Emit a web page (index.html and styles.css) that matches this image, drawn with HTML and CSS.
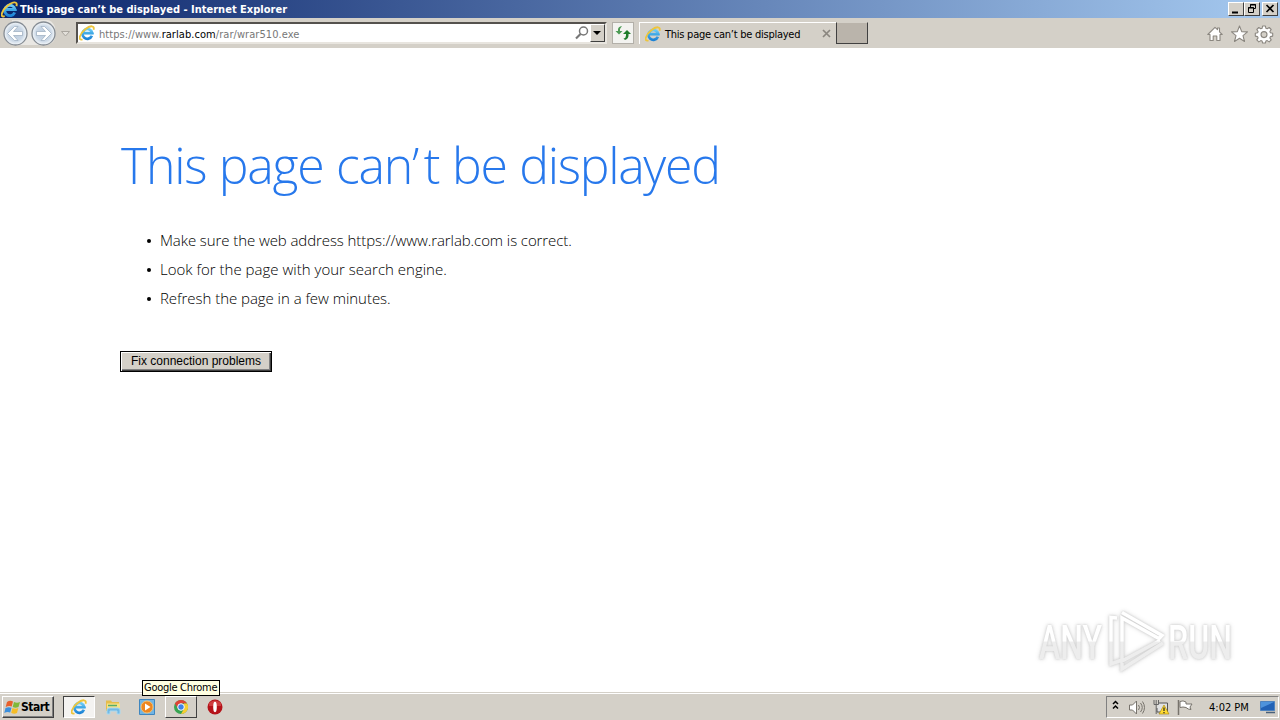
FILE: index.html
```
<!DOCTYPE html>
<html lang="en">
<head>
<meta charset="utf-8">
<title>This page can’t be displayed</title>
<link rel="stylesheet" href="styles.css">
</head>
<body>
<svg class="defs" aria-hidden="true">
  <defs>
    <linearGradient id="blue" x1="0" y1="0" x2="0" y2="1"><stop offset="0" stop-color="#6cccf5"/><stop offset="1" stop-color="#1c83d6"/></linearGradient>
    <radialGradient id="glass"><stop offset="0" stop-color="#b9c9dc"/><stop offset=".65" stop-color="#cbd8e6"/><stop offset="1" stop-color="#f5f8fb"/></radialGradient>
    <symbol id="ie" viewBox="0 0 16 16">
      <path d="M12.900 10.800A4.900 4.900 0 1 1 13.200 8H4.600" fill="none" stroke="url(#blue)" stroke-width="2.700"/>
      <path d="M4 8.500h10.500" stroke="#3fa9e6" stroke-width="1.800"/>
      <path d="M3.500 14.300C-1.500 16 .5 9 6 4.500S16 .3 14.500 4.800" fill="none" stroke="#edc53c" stroke-width="1.800"/>
    </symbol>
  </defs>
</svg>
<div class="desktop">
  <header class="titlebar">
    <svg class="i17"><use href="#ie"/></svg>
    <span class="title">This page can’t be displayed - Internet Explorer</span>
    <div class="winbtns">
      <span class="wb"><svg viewBox="0 0 14 11"><path d="M3 9.500h6" stroke="#000" stroke-width="2"/></svg></span>
      <span class="wb"><svg viewBox="0 0 14 11"><path d="M5.500 4V1.500h5v4H9M5 2h6M3.500 4.500h5v5h-5zM3 5h6" fill="none" stroke="#000"/></svg></span>
      <span class="wb close"><svg viewBox="0 0 14 11"><path d="M3.500 2l7 7M10.500 2l-7 7" stroke="#000" stroke-width="1.7"/></svg></span>
    </div>
  </header>
  <nav class="toolbar">
    <svg class="navs" viewBox="0 0 76 30">
      <path d="M12 2h35q5 0 8 7v12q-3 6-10 6H12z" fill="#e9e7e3"/>
      <circle cx="15.500" cy="15.500" r="11.500" fill="url(#glass)" stroke="#858c94" stroke-width="1.300"/>
      <circle cx="43.500" cy="15.500" r="11.500" fill="url(#glass)" stroke="#858c94" stroke-width="1.300"/>
      <path d="M7.500 15.500l7-7h3.500l-4.500 5h9v4h-9l4.500 5h-3.500z" fill="#fff" stroke="#9aabbd" stroke-width=".7"/>
      <path d="M51.500 15.500l-7-7H41l4.500 5h-9v4h9l-4.500 5h3.500z" fill="#fff" stroke="#9aabbd" stroke-width=".7"/>
      <path d="M61.500 13.500h8l-4 4.500z" fill="#e3e0da" stroke="#aaa69f"/>
    </svg>
    <div class="address">
      <svg class="i16"><use href="#ie"/></svg>
      <span class="url">https://www.<b>rarlab.com</b>/rar/wrar510.exe</span>
      <svg class="search" viewBox="0 0 16 16"><circle cx="9.500" cy="6" r="4" fill="none" stroke="#777" stroke-width="1.500"/><path d="M6.500 9L2 13.500" stroke="#777" stroke-width="2.200"/></svg>
      <span class="drop"><svg viewBox="0 0 12 16"><path d="M2 6h8L6 10z"/></svg></span>
    </div>
    <div class="refresh"><svg viewBox="0 0 20 20"><path d="M9 3Q5 3.500 5 6.500V8H2.500L6 11.500 9.500 8H7V6z" fill="#4c9b54"/><path d="M10.500 15.500q2.500-.5 2.500-3V11h-3l4-4 4 4h-2.500v1.500q0 3-3.500 4.500z" fill="#1f7d2b"/></svg></div>
    <div class="tab">
      <svg class="i16"><use href="#ie"/></svg>
      <span class="tabtext">This page can’t be displayed</span>
      <svg class="tabx" viewBox="0 0 9 9"><path d="M1 1l7 7M8 1L1 8" stroke="#8a867f" stroke-width="1.700"/></svg>
    </div>
    <div class="newtab"></div>
    <svg class="tools" viewBox="0 0 70 20">
      <g fill="#fff" stroke="#8b8780" stroke-width="1.100" stroke-linejoin="round">
        <path d="M4 16.500v-6H1.800L9 3.300l2.500 2.400V4h2v3.800l2.700 2.700H14v6h-3.200V12H7.200v4.500z"/>
        <path d="M33.500 2l2.200 5.600 5.800.3-4.500 3.800 1.500 5.800-5-3.200-5 3.200 1.500-5.800-4.500-3.800 5.800-.3z"/>
        <path d="M56.600 2h2.800l.5 2.300 1.300.5 2-1.300 2 2-1.300 2 .5 1.300 2.300.5v2.800l-2.300.5-.5 1.300 1.300 2-2 2-2-1.300-1.300.5-.5 1.900h-2.800l-.5-1.900-1.300-.5-2 1.300-2-2 1.300-2-.5-1.300-2.300-.5V9.300l2.300-.5.500-1.300-1.300-2 2-2 2 1.300 1.300-.5z"/>
        <circle cx="58" cy="10.600" r="3" fill="#d4d0c8"/>
      </g>
    </svg>
  </nav>
  <main class="page">
    <h1 class="heading">This page can<span class="apos">’</span>t be displayed</h1>
    <ul class="tips">
      <li class="t1">Make sure the web address https://www.rarlab.com is correct.</li>
      <li class="t2">Look for the page with your search engine.</li>
      <li class="t3">Refresh the page in a few minutes.</li>
    </ul>
    <button class="fix">Fix connection problems</button>
    <svg class="mark" viewBox="0 0 220 80">
      <defs><linearGradient id="wm" x1="0" y1="20" x2="0" y2="60" gradientUnits="userSpaceOnUse"><stop offset=".52" stop-color="#fff"/><stop offset=".56" stop-color="#ededed"/></linearGradient></defs>
      <g class="glow" fill="url(#wm)">
        <text x="9" y="59" textLength="63" lengthAdjust="spacingAndGlyphs">ANY</text>
        <text x="138" y="59" textLength="64" lengthAdjust="spacingAndGlyphs">RUN</text>
        <path d="M92 12.500L132 35.500L129 38.500L92 18V61L130 40.500M87 18L81 17.500V64L92 60M92 63V69L133 43" fill="none" stroke="url(#wm)" stroke-width="3.500"/>
      </g>
    </svg>
    <div class="tooltip"><span>Google Chrome</span></div>
  </main>
  <footer class="taskbar">
    <div class="start">
      <svg viewBox="0 0 17 16"><path d="M3 3q3-2 6-.5L7.700 7.500Q5 6.500 1.700 8z" fill="#e8602c"/><path d="M10 3q3 1.500 6 0l-1.500 5q-3 1.500-5.800 0z" fill="#80b83a"/><path d="M1.500 9q3-1.500 6-.3L6.200 13.500Q3 12.500.3 14z" fill="#3b8fdd"/><path d="M8.500 9q3 1.500 5.800 0L13 14q-3 1.500-5.800-.3z" fill="#f6bd27"/></svg>
      <b>Start</b>
    </div>
    <div class="task active"><svg class="i16"><use href="#ie"/></svg></div>
    <div class="task"><svg class="i18" viewBox="0 0 18 18"><path d="M2 2.500h5l1 1.500h7v9H2z" fill="#e5bd4c"/><path d="M3 5.500h13V12H3z" fill="#f8e287"/><path d="M4 7.500h9" stroke="#57ad68" stroke-width="1.500"/><path d="M3 16v-4q0-2 2-2h9q2 0 2 2v4h-3v-3H6v3z" fill="#72b9e5" stroke="#a8d9f1"/></svg></div>
    <div class="task"><svg class="i18" viewBox="0 0 18 18"><path d="M1.500 1.500h15v15h-15z" fill="#71b5e5" stroke="#3f86bf"/><circle cx="9" cy="9" r="6" fill="#ed8620" stroke="#f9c06c"/><path d="M7 5.500l5.500 3.500L7 12.500z" fill="#fff"/></svg></div>
    <div class="task raised"><svg class="i18" viewBox="0 0 18 18"><circle cx="9" cy="9" r="7" fill="#37a451"/><path d="M2.900 5.500A7 7 0 0 1 15.100 5.500H9L6 10.700z" fill="#de4336"/><path d="M15.100 5.500A7 7 0 0 1 9 16l3-5.200V5.500z" fill="#f8ce32"/><circle cx="9" cy="9" r="3.300" fill="#3f82e8" stroke="#fff"/></svg></div>
    <div class="task"><svg class="i18" viewBox="0 0 18 18"><circle cx="9" cy="9" r="7.500" fill="#b51219"/><path d="M3 5q6-5 12 0v3H3z" fill="#cf3c3f"/><ellipse cx="9" cy="9" rx="1.800" ry="5.200" fill="#fff"/></svg></div>
    <div class="tray">
      <svg class="trayicons" viewBox="0 0 92 20">
        <path d="M6 7L8.500 4.500 11 7M6 11.500L8.500 9l2.500 2.500" fill="none" stroke="#000" stroke-width="1.500"/>
        <g fill="#fff" stroke="#77736c"><path d="M22.500 8h3l4-4v13l-4-4h-3z"/><path d="M31.500 8q2 2.500 0 5M33.500 6q3.500 4.500 0 9M35.500 4.500q4 6 0 12" fill="none"/></g>
        <path d="M51 6h9.500v9H50v-4" fill="#e0e1e2" stroke="#555"/><path d="M47 3v4.500h4.500V3M49.200 3v14" fill="none" stroke="#666"/><path d="M57 8l5 9H52z" fill="#ffdb33" stroke="#a58100" stroke-width=".6"/><path d="M57 10.500v3.500M57 15v1.200" stroke="#222" stroke-width="1.200"/>
        <path d="M71.500 3v15" stroke="#77736c" stroke-width="1.500"/><path d="M73 4.500q3-1.500 6 .5v2h6l-2 3 1 2.500q-3 0-5-2-3-1-6 0z" fill="#fff" stroke="#77736c"/>
      </svg>
      <span class="clock">4:02 PM</span>
      <svg class="monitor" viewBox="0 0 18 16"><path d="M1.500 2.500h14v9h-14z" fill="#2262b6" stroke="#4f83be"/><path d="M2 3h13L2 9z" fill="#4e93dc"/><path d="M7 13.500h9" stroke="#49617b" stroke-width="1.500"/></svg>
    </div>
  </footer>
</div>
</body>
</html>
```
FILE: styles.css
```
* { box-sizing: border-box; }
body { margin: 0; background: #fff; color: #000; font-family: "DejaVu Sans Condensed", "DejaVu Sans", sans-serif; font-size: 11px; }
svg { display: block; flex: none; }
.defs { position: absolute; width: 0; height: 0; }
.desktop { width: 1280px; height: 720px; display: flex; flex-direction: column; overflow: hidden; }
.i16 { width: 16px; height: 16px; }
.i17 { width: 17px; height: 17px; }
.i18 { width: 18px; height: 18px; }
span, b, li, h1, button { white-space: nowrap; }

.titlebar { height: 18px; flex: none; display: flex; align-items: center; padding: 0 2px 0 1px; background: linear-gradient(90deg, #0a246a, #a6caf0); }
.title { color: #fff; font: bold 11px "DejaVu Sans Condensed", sans-serif; margin-left: 2px; letter-spacing: .01px; }
.winbtns { display: flex; margin-left: auto; }
.wb { width: 16px; height: 14px; background: #d4d0c8; border: 1px solid; border-color: #fff #404040 #404040 #fff; }
.wb svg { width: 14px; height: 11px; }
.wb.close { margin-left: 2px; }

.toolbar { height: 30px; flex: none; display: flex; align-items: center; background: #d4d0c8; }
.navs { width: 76px; height: 30px; }
.address { width: 531px; height: 22px; display: flex; align-items: center; background: #fff; border: 2px solid; border-color: #55524e #e8e5df #e8e5df #55524e; padding-left: 1px; }
.url { color: #777; margin-left: 4px; padding-top: 2px; letter-spacing: .06px; }
.url b { font-weight: normal; color: #000; }
.search { width: 16px; height: 16px; margin-left: auto; }
.drop { width: 15px; height: 18px; background: #d4d0c8; border: 1px solid; border-color: #fff #404040 #404040 #fff; }
.drop svg { width: 12px; height: 16px; }
.refresh { width: 22px; height: 22px; margin-left: 5px; background: #f3f3f0; border: 1px solid #b3b0a9; }
.refresh svg { width: 20px; height: 20px; }
.tab { width: 197px; height: 22px; margin-left: 5px; padding: 0 5px; display: flex; align-items: center; border-top: 1px solid #fff; border-left: 1px solid #fff; }
.tabtext { margin-left: 4px; padding-top: 2px; letter-spacing: -.25px; }
.tabx { width: 9px; height: 9px; margin-left: auto; }
.newtab { width: 32px; height: 22px; margin-top: -1px; background: #bab4ab; border: 1px solid; border-color: #d4d0c8 #404040 #404040 #404040; }
.tools { width: 70px; height: 20px; margin: 2px 4px 0 auto; }

.page { position: relative; flex: 1; padding: 83px 0 0 120px; background: #fff; }
.heading { margin: 0; padding-left: 1px; font: 300 50px/68px "Open Sans", "Noto Sans", sans-serif; letter-spacing: -1.3px; word-spacing: 1px; color: #2778ec; }
.apos { letter-spacing: 4.7px; }
.tips { margin: 27px 0 0; padding: 0 0 0 40px; font: 300 15px/29px "Open Sans", "Noto Sans", sans-serif; list-style: none; color: #000; }
.tips li { display: flex; align-items: center; }
.tips li::before { content: ""; width: 4px; height: 4px; border-radius: 50%; background: #000; margin: 0 9px 0 -13px; }
.t1 { letter-spacing: -.085px; }
.t2 { letter-spacing: .01px; }
.t3 { letter-spacing: -.04px; }
.fix { display: block; width: 152px; height: 21px; margin: 38px 0 0; padding: 0 0 2px; color: #000; background: #d4d0c8; border: 1px solid #000; border-radius: 0; box-shadow: inset 1px 1px #fff, inset -1px -1px #404040, inset -2px -2px #808080; font: 12px "Liberation Sans", Arial, sans-serif; }
.mark { position: absolute; left: 1030px; top: 552px; width: 220px; height: 80px; overflow: visible; }
.glow { filter: drop-shadow(0 0 1px #ccc) drop-shadow(0 0 2px #ddd); font: 500 49px Roboto, sans-serif; }
.tooltip { position: absolute; left: 142px; bottom: -4px; width: 78px; height: 16px; padding: 0 1px; line-height: 14px; letter-spacing: -.28px; background: #ffffe1; border: 1px solid #000; }

.taskbar { height: 28px; flex: none; display: flex; align-items: flex-start; padding: 4px 1px 0 2px; background: #d4d0c8; box-shadow: inset 0 1px #d4d0c8, inset 0 2px #fff; }
.start { width: 52px; height: 22px; display: flex; align-items: center; padding-left: 1px; margin-right: 9px; border: 1px solid; border-color: #fff #404040 #404040 #fff; box-shadow: inset -1px -1px #808080; }
.start svg { width: 17px; height: 16px; }
.start b { font-size: 12px; letter-spacing: -.5px; }
.task { width: 32px; height: 22px; margin-right: 2px; display: flex; align-items: center; justify-content: center; }
.active { background: #f4f3f1; border: 1px solid; border-color: #404040 #fff #fff #404040; }
.raised { border: 1px solid; border-color: #fff #404040 #404040 #fff; }
.tray { width: 173px; height: 22px; margin-left: auto; display: flex; align-items: center; border: 1px solid; border-color: #808080 #fff #fff #808080; }
.trayicons { width: 92px; height: 20px; }
.clock { margin-left: 10px; }
.monitor { width: 18px; height: 16px; margin: 0 1px 0 auto; }
```
